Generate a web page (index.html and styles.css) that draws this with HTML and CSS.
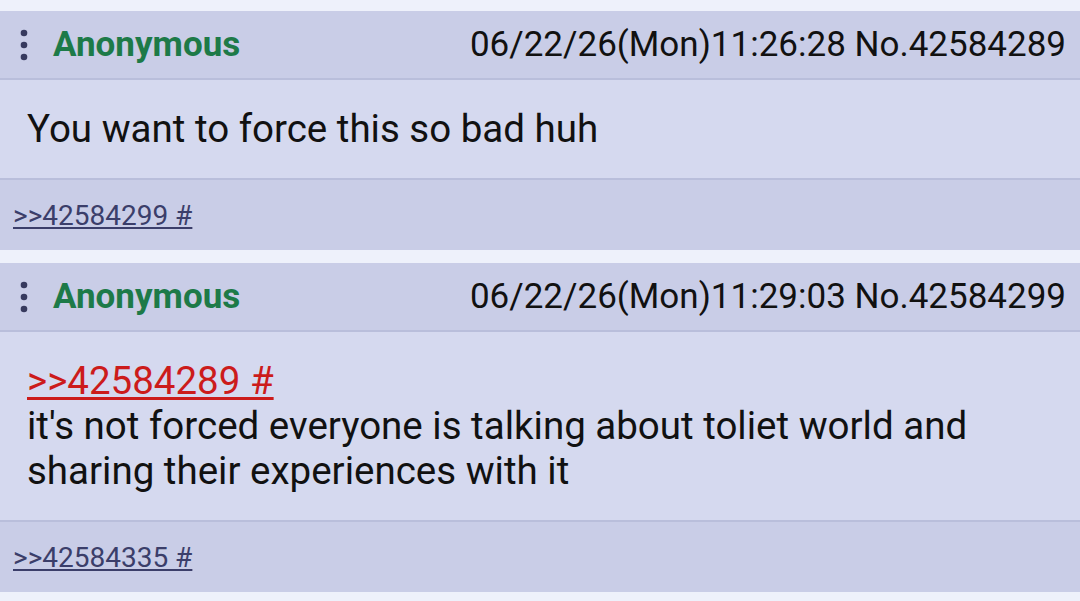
FILE: index.html
```html
<!DOCTYPE html>
<html lang="en">
<head>
    <meta charset="UTF-8">
    <meta name="viewport" content="width=device-width, initial-scale=1.0">
    <title>Thread</title>
    <link rel="stylesheet" href="styles.css">
</head>
<body>
    <div class="thread">
        <!-- Post 1 -->
        <div class="post">
            <div class="post-head">
                <svg class="menu-dots" width="8" height="32" viewBox="0 0 8 32">
                    <circle cx="4" cy="4" r="3.3"/>
                    <circle cx="4" cy="16" r="3.3"/>
                    <circle cx="4" cy="28" r="3.3"/>
                </svg>
                <span class="name">Anonymous</span>
                <span class="stamp">06/22/26(Mon)11:26:28 No.42584289</span>
            </div>
            <div class="post-body">
                <p>You want to force this so bad huh</p>
            </div>
            <div class="post-foot">
                <a href="#p42584299">&gt;&gt;42584299 #</a>
            </div>
        </div>

        <!-- Post 2 -->
        <div class="post">
            <div class="post-head">
                <svg class="menu-dots" width="8" height="32" viewBox="0 0 8 32">
                    <circle cx="4" cy="4" r="3.3"/>
                    <circle cx="4" cy="16" r="3.3"/>
                    <circle cx="4" cy="28" r="3.3"/>
                </svg>
                <span class="name">Anonymous</span>
                <span class="stamp">06/22/26(Mon)11:29:03 No.42584299</span>
            </div>
            <div class="post-body">
                <a class="quote" href="#p42584289">&gt;&gt;42584289 #</a>
                <p>it's not forced everyone is talking about toliet world and sharing their experiences with it</p>
            </div>
            <div class="post-foot">
                <a href="#p42584335">&gt;&gt;42584335 #</a>
            </div>
        </div>
    </div>
</body>
</html>
```

FILE: styles.css
```css
/* Basic reset */
* {
    margin: 0;
    padding: 0;
    box-sizing: border-box;
}

body {
    background-color: #eef1fb;
    font-family: Roboto, "Noto Sans", Arial, sans-serif;
    color: #111;
}

.thread {
    display: flex;
    flex-direction: column;
    gap: 13px;
    padding-top: 11px;
}

/* Post card */
.post {
    background-color: #d5d9ef;
}

.post-head {
    display: flex;
    align-items: center;
    height: 69px;
    padding: 0 14px 0 20px;
    background-color: #c9cde7;
    border-bottom: 2px solid #b9bedb;
}

.menu-dots {
    fill: #373a5e;
    flex-shrink: 0;
}

.name {
    margin-left: 25px;
    color: #1d7a48;
    font-weight: bold;
    font-size: 35px;
}

.stamp {
    margin-left: auto;
    font-size: 35px;
    color: #111;
}

/* Comment */
.post-body {
    padding: 26px 26px 27px 27px;
    font-size: 38.5px;
    line-height: 45px;
    border-bottom: 2px solid #b9bedb;
}

.quote {
    display: block;
    color: #cc1b1b;
    text-decoration: underline;
    text-underline-offset: 3px;
}

/* Replies */
.post-foot {
    display: flex;
    align-items: center;
    height: 70px;
    padding: 0 13px;
    background-color: #c9cde7;
}

.post-foot a {
    font-size: 28px;
    color: #3b3e6a;
    text-decoration: underline;
}
```
